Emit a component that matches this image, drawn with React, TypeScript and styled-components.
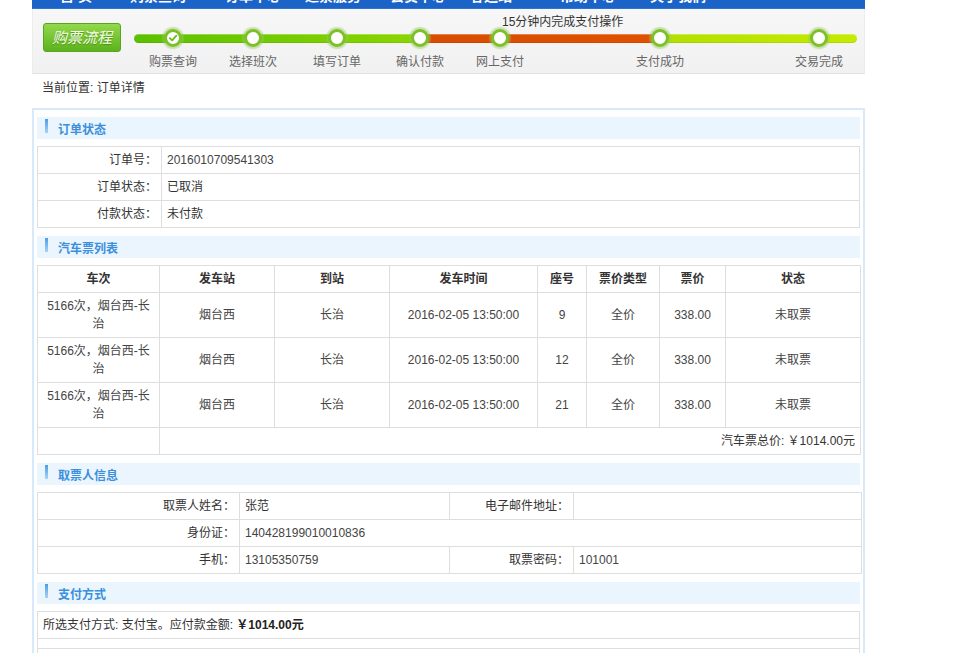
import React from "react";
import styled, { createGlobalStyle } from "styled-components";

const GlobalStyle = createGlobalStyle`
  body {
    margin: 0;
    background: #ffffff;
    font-family: "Liberation Sans", "Noto Sans CJK SC", sans-serif;
    font-size: 12px;
    color: #333333;
  }
`;

const Page = styled.div`
  width: 833px;
  margin-left: 32px;
`;

const NavBar = styled.div`
  height: 9px;
  overflow: hidden;
  background: #1b63c6;
  border-bottom: 1px solid #2f74d2;
  box-sizing: border-box;
  display: grid;
  grid-template-columns: 70px 95px 80px 85px 80px 90px 90px 80px;
  padding-left: 28px;
`;

const NavItem = styled.span`
  color: #ffffff;
  font-size: 14px;
  font-weight: bold;
  line-height: 14px;
  margin-top: -11px;
  white-space: nowrap;
`;

const StepArea = styled.div`
  height: 65px;
  box-sizing: border-box;
  display: flex;
  align-items: flex-start;
  padding-left: 10px;
  background: linear-gradient(#f7f7f7, #f1f1f1);
  border: 1px solid #ececec;
  border-top: none;
  border-bottom-color: #e2e2e2;
`;

const FlowButton = styled.div`
  margin-top: 14px;
  width: 78px;
  height: 29px;
  box-sizing: border-box;
  border: 1px solid #58a521;
  border-radius: 3px;
  background: linear-gradient(#93d84c, #5cb21c);
  color: #f4ffe6;
  font-size: 15px;
  font-style: italic;
  line-height: 27px;
  text-align: center;
  text-shadow: 0 1px 1px rgba(40, 90, 0, 0.5);
`;

const Steps = styled.div`
  margin-left: 13px;
  width: 723px;
`;

const Notice = styled.div`
  margin-top: 5px;
  padding-left: 368px;
  height: 16px;
  line-height: 16px;
  color: #333333;
  white-space: nowrap;
`;

const Track = styled.div`
  position: relative;
  margin-top: 4px;
  height: 9px;
  border-radius: 5px;
  background: linear-gradient(
    to right,
    #5cc000 0,
    #8bd600 286px,
    #d84c00 286px,
    #e05200 526px,
    #b2e000 526px,
    #c6ea00 100%
  );
  box-shadow: inset 0 1px 0 rgba(255, 255, 255, 0.3),
    inset 0 -1px 0 rgba(0, 0, 0, 0.08);
`;

const Node = styled.div`
  position: absolute;
  top: -5px;
  width: 60px;
  transform: translateX(-50%);
  display: flex;
  flex-direction: column;
  align-items: center;
`;

const Dot = styled.div`
  width: 18px;
  height: 18px;
  box-sizing: border-box;
  border-radius: 50%;
  background: #ffffff;
  border: 3px solid #7cc226;
  box-shadow: 0 0 1px 2px rgba(150, 200, 100, 0.45);
  display: flex;
  align-items: center;
  justify-content: center;
`;

const StepLabel = styled.div`
  margin-top: 7px;
  line-height: 16px;
  color: #666666;
  white-space: nowrap;
`;

const Breadcrumb = styled.div`
  height: 34px;
  line-height: 28px;
  padding-left: 10px;
  color: #333333;
`;

const Panel = styled.div`
  border: 2px solid #d7eafb;
  padding: 7px 3px 0;
`;

const SectionHead = styled.div`
  height: 22px;
  display: flex;
  align-items: center;
  background: #eaf5fe;
  margin-bottom: 7px;
`;

const HeadBar = styled.span`
  align-self: flex-start;
  width: 3px;
  height: 14px;
  margin: 2px 10px 0 8px;
  background: linear-gradient(#4b9de6, #a9d3f6);
`;

const HeadTitle = styled.span`
  color: #3b8fdc;
  font-weight: bold;
`;

const Table = styled.table`
  width: 100%;
  table-layout: fixed;
  border-collapse: collapse;
  margin-bottom: 8px;

  th,
  td {
    border: 1px solid #dedede;
    line-height: 18px;
    padding: 4px 5px;
    font-size: 12px;
    color: #333333;
  }

  th {
    font-weight: bold;
    text-align: center;
  }
`;

const Label = styled.td`
  text-align: right;
  padding-right: 4px !important;
`;

const Value = styled.td<{ $num?: boolean }>`
  text-align: left;
  color: ${(p) => (p.$num ? "#444444" : "#333333")} !important;
`;

const Cell = styled.td`
  text-align: center;
  color: #444444 !important;
`;

const TotalCell = styled.td`
  text-align: right;
`;

const Amount = styled.b`
  color: #222222;
`;

const SpacerRow = styled.tr<{ $h: number }>`
  td {
    height: ${(p) => p.$h}px;
    padding: 0;
  }
`;

const steps = [
  { name: "购票查询", at: 39, done: true },
  { name: "选择班次", at: 119 },
  { name: "填写订单", at: 203 },
  { name: "确认付款", at: 286 },
  { name: "网上支付", at: 366 },
  { name: "支付成功", at: 526 },
  { name: "交易完成", at: 685 },
];

const navItems = ["首 页", "购票查询", "订单中心", "退票服务", "会员中心", "客运站", "帮助中心", "关于我们"];

const tickets = [{ seat: "9" }, { seat: "12" }, { seat: "21" }];

const Section = ({ title }: { title: string }) => (
  <SectionHead>
    <HeadBar />
    <HeadTitle>{title}</HeadTitle>
  </SectionHead>
);

const App = () => {
  return (
    <>
      <GlobalStyle />
      <Page>
        <NavBar>
          {navItems.map((n) => (
            <NavItem key={n}>{n}</NavItem>
          ))}
        </NavBar>

        <StepArea>
          <FlowButton>购票流程</FlowButton>
          <Steps>
            <Notice>15分钟内完成支付操作</Notice>
            <Track>
              {steps.map((s) => (
                <Node key={s.name} style={{ left: s.at }}>
                  <Dot>
                    {s.done && (
                      <svg width="10" height="10" viewBox="0 0 10 10">
                        <path
                          d="M1.8 5.2 L4.2 7.4 L8.4 2.6"
                          fill="none"
                          stroke="#6cbb1e"
                          strokeWidth="1.8"
                          strokeLinecap="round"
                          strokeLinejoin="round"
                        />
                      </svg>
                    )}
                  </Dot>
                  <StepLabel>{s.name}</StepLabel>
                </Node>
              ))}
            </Track>
          </Steps>
        </StepArea>

        <Breadcrumb>当前位置: 订单详情</Breadcrumb>

        <Panel>
          <Section title="订单状态" />
          <Table>
            <colgroup>
              <col style={{ width: 124 }} />
              <col />
            </colgroup>
            <tbody>
              <tr>
                <Label>订单号：</Label>
                <Value $num>2016010709541303</Value>
              </tr>
              <tr>
                <Label>订单状态：</Label>
                <Value>已取消</Value>
              </tr>
              <tr>
                <Label>付款状态：</Label>
                <Value>未付款</Value>
              </tr>
            </tbody>
          </Table>

          <Section title="汽车票列表" />
          <Table>
            <colgroup>
              {[122, 115, 115, 148, 49, 73, 66, 135].map((w, i) => (
                <col key={i} style={{ width: w }} />
              ))}
            </colgroup>
            <thead>
              <tr>
                <th>车次</th>
                <th>发车站</th>
                <th>到站</th>
                <th>发车时间</th>
                <th>座号</th>
                <th>票价类型</th>
                <th>票价</th>
                <th>状态</th>
              </tr>
            </thead>
            <tbody>
              {tickets.map((t) => (
                <tr key={t.seat}>
                  <Cell>5166次，烟台西-长治</Cell>
                  <Cell>烟台西</Cell>
                  <Cell>长治</Cell>
                  <Cell>2016-02-05 13:50:00</Cell>
                  <Cell>{t.seat}</Cell>
                  <Cell>全价</Cell>
                  <Cell>338.00</Cell>
                  <Cell>未取票</Cell>
                </tr>
              ))}
              <tr>
                <td />
                <TotalCell colSpan={7}>汽车票总价: ￥1014.00元</TotalCell>
              </tr>
            </tbody>
          </Table>

          <Section title="取票人信息" />
          <Table>
            <colgroup>
              {[202, 210, 124, 288].map((w, i) => (
                <col key={i} style={{ width: w }} />
              ))}
            </colgroup>
            <tbody>
              <tr>
                <Label>取票人姓名：</Label>
                <Value>张范</Value>
                <Label>电子邮件地址：</Label>
                <Value />
              </tr>
              <tr>
                <Label>身份证：</Label>
                <Value $num colSpan={3}>
                  140428199010010836
                </Value>
              </tr>
              <tr>
                <Label>手机：</Label>
                <Value $num>13105350759</Value>
                <Label>取票密码：</Label>
                <Value $num>101001</Value>
              </tr>
            </tbody>
          </Table>

          <Section title="支付方式" />
          <Table>
            <tbody>
              <tr>
                <Value>
                  所选支付方式: 支付宝。应付款金额: <Amount>￥1014.00元</Amount>
                </Value>
              </tr>
              <SpacerRow $h={9}>
                <td />
              </SpacerRow>
              <SpacerRow $h={30}>
                <td />
              </SpacerRow>
            </tbody>
          </Table>
        </Panel>
      </Page>
    </>
  );
};

export default App;
